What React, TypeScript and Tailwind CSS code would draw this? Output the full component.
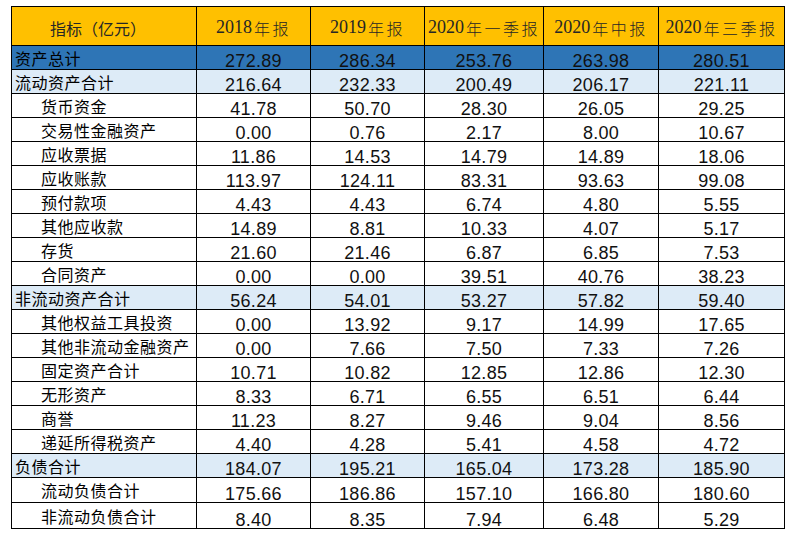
type Row = {
  label: string;
  sub?: boolean;
  tone?: 'blue' | 'light';
  h?: string;
  values: string[];
};

const years = [
  { num: '2018', cn: '年报' },
  { num: '2019', cn: '年报' },
  { num: '2020', cn: '年一季报' },
  { num: '2020', cn: '年中报' },
  { num: '2020', cn: '年三季报' },
];

const rows: Row[] = [
  { label: '资产总计', tone: 'blue', values: ['272.89', '286.34', '253.76', '263.98', '280.51'] },
  { label: '流动资产合计', tone: 'light', values: ['216.64', '232.33', '200.49', '206.17', '221.11'] },
  { label: '货币资金', sub: true, values: ['41.78', '50.70', '28.30', '26.05', '29.25'] },
  { label: '交易性金融资产', sub: true, values: ['0.00', '0.76', '2.17', '8.00', '10.67'] },
  { label: '应收票据', sub: true, values: ['11.86', '14.53', '14.79', '14.89', '18.06'] },
  { label: '应收账款', sub: true, values: ['113.97', '124.11', '83.31', '93.63', '99.08'] },
  { label: '预付款项', sub: true, values: ['4.43', '4.43', '6.74', '4.80', '5.55'] },
  { label: '其他应收款', sub: true, values: ['14.89', '8.81', '10.33', '4.07', '5.17'] },
  { label: '存货', sub: true, values: ['21.60', '21.46', '6.87', '6.85', '7.53'] },
  { label: '合同资产', sub: true, values: ['0.00', '0.00', '39.51', '40.76', '38.23'] },
  { label: '非流动资产合计', tone: 'light', values: ['56.24', '54.01', '53.27', '57.82', '59.40'] },
  { label: '其他权益工具投资', sub: true, values: ['0.00', '13.92', '9.17', '14.99', '17.65'] },
  { label: '其他非流动金融资产', sub: true, values: ['0.00', '7.66', '7.50', '7.33', '7.26'] },
  { label: '固定资产合计', sub: true, values: ['10.71', '10.82', '12.85', '12.86', '12.30'] },
  { label: '无形资产', sub: true, values: ['8.33', '6.71', '6.55', '6.51', '6.44'] },
  { label: '商誉', sub: true, values: ['11.23', '8.27', '9.46', '9.04', '8.56'] },
  { label: '递延所得税资产', sub: true, values: ['4.40', '4.28', '5.41', '4.58', '4.72'] },
  { label: '负债合计', tone: 'light', values: ['184.07', '195.21', '165.04', '173.28', '185.90'] },
  { label: '流动负债合计', sub: true, h: 'h-[25px]', values: ['175.66', '186.86', '157.10', '166.80', '180.60'] },
  { label: '非流动负债合计', sub: true, h: 'h-[26px]', values: ['8.40', '8.35', '7.94', '6.48', '5.29'] },
];

export default function App() {
  return (
    <div className="min-h-screen bg-white pl-[11px] pt-[6px]">
      <div className="grid w-[774px] grid-cols-[185px_114px_114px_119px_115px_126px] border-l border-t border-black text-[#111]">
        <div className="flex h-[39px] items-center justify-center border-b border-r border-black bg-[#ffc000] pr-[12px] pt-[3px] font-['Noto_Sans_CJK_SC','Noto_Sans',sans-serif] text-[16px] text-[#262626]">
          指标（亿元）
        </div>
        {years.map((y, i) => (
          <div
            key={i}
            className="flex h-[39px] items-center justify-center whitespace-nowrap border-b border-r border-black bg-[#ffc000] pt-[3px] text-[#262626]"
          >
            <span className="font-['Liberation_Serif',serif] text-[18px]">{y.num}</span>
            <span className="ml-[2px] font-['Noto_Sans_CJK_SC','Noto_Sans',sans-serif] text-[16px] font-light tracking-[2.5px]">
              {y.cn}
            </span>
          </div>
        ))}
        {rows.map((r) => {
          const bg = r.tone === 'blue' ? 'bg-[#2e75b6]' : r.tone === 'light' ? 'bg-[#ddebf7]' : 'bg-white';
          const h = r.h ?? 'h-[24px]';
          return [
            <div
              key={r.label}
              className={`flex ${h} items-center whitespace-nowrap border-b border-r border-black ${bg} ${
                r.sub ? 'pl-[29px]' : 'pl-[3px]'
              } font-['Noto_Sans_CJK_SC','Noto_Sans',sans-serif] text-[16px] tracking-[0.5px] text-black`}
            >
              {r.label}
            </div>,
            ...r.values.map((v, j) => (
              <div
                key={r.label + j}
                className={`flex ${h} items-end justify-center border-b border-r border-black ${bg} font-['Liberation_Sans',Arial,sans-serif] text-[18px] leading-[15px] tracking-[0.3px]`}
              >
                {v}
              </div>
            )),
          ];
        })}
      </div>
    </div>
  );
}
